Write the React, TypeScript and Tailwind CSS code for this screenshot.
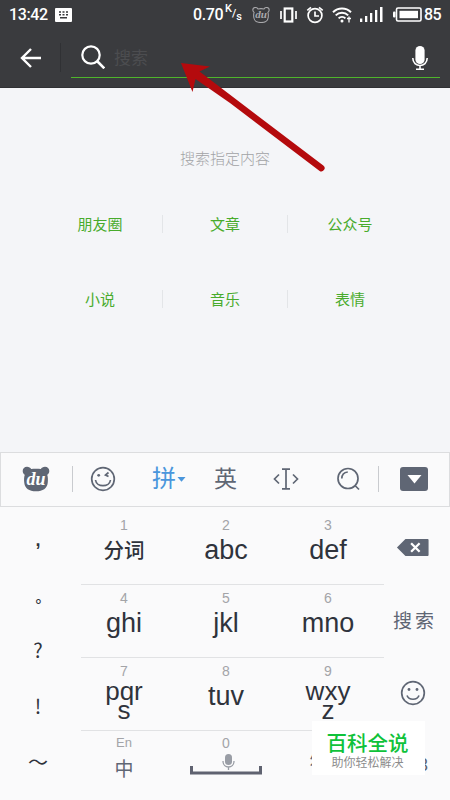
import clsx from 'clsx'

const topics = [
  ['朋友圈', '文章', '公众号'],
  ['小说', '音乐', '表情'],
]

const rows = [
  [
    { digit: '1', lines: ['分词'] },
    { digit: '2', lines: ['abc'] },
    { digit: '3', lines: ['def'] },
  ],
  [
    { digit: '4', lines: ['ghi'] },
    { digit: '5', lines: ['jkl'] },
    { digit: '6', lines: ['mno'] },
  ],
  [
    { digit: '7', lines: ['pqr', 's'] },
    { digit: '8', lines: ['tuv'] },
    { digit: '9', lines: ['wxy', 'z'] },
  ],
]

const BearIcon = ({ outline }: { outline?: boolean }) => (
  <svg
    viewBox="0 0 28 26"
    className={outline ? 'h-[16px] w-[18px]' : 'h-[26px] w-[28px]'}
  >
    <path
      d="M5 .8C2.500.8.7 2.500.7 4.900c0 1.800.9 3.100 2.100 3.900C2 11 1.900 14 2.300 17c.7 5.500 4.700 8.300 11.700 8.300s11-2.800 11.700-8.300c.4-3 .3-6-.5-8.200 1.200-.8 2.100-2.100 2.100-3.900C27.300 2.500 25.500.8 23 .8c-2 0-3.400.9-4.100 2.300-3-.6-6.800-.6-9.800 0C8.400 1.700 7 .8 5 .8z"
      fill={outline ? 'none' : '#5f6674'}
      stroke={outline ? '#a9a9ac' : 'none'}
      strokeWidth="1.700"
    />
    <text
      x="14"
      y="18.500"
      textAnchor="middle"
      fontFamily="Liberation Serif, serif"
      fontStyle="italic"
      fontWeight="bold"
      fontSize="18"
      fill={outline ? '#a9a9ac' : '#fff'}
    >
      du
    </text>
  </svg>
)

const StatusBar = () => (
  <div className="flex h-[29px] items-center pl-[9px] text-[16px] font-medium text-white">
    <span className="w-[46px] tracking-[-0.4px]">13:42</span>
    <svg viewBox="0 0 17 14" className="h-[14px] w-[17px]">
      <rect width="17" height="14" rx="1" fill="#fff" />
      <path
        d="M4 4h2M7.500 4h2M11 4h2M4 6.700h2M7.500 6.700h2M11 6.700h2M5 9.800h7"
        stroke="#3a3b3e"
        strokeWidth="1.400"
      />
    </svg>
    <span className="ml-[121px] w-[32px] tracking-[-0.4px]">0.70</span>
    <span className="flex w-[17px] text-[11px] leading-none">
      <span className="-mt-[5px]">K</span>
      <span>/</span>
      <span className="mt-[3px]">s</span>
    </span>
    <div className="ml-[10px] flex items-center">
      <BearIcon outline />
      <svg
        viewBox="0 0 17 16"
        className="ml-[10px] h-[16px] w-[17px]"
        fill="none"
        stroke="#fff"
      >
        <rect x="4.700" y="1.500" width="7.600" height="13" strokeWidth="2.200" />
        <path d="M1 4v8M16 4v8" strokeWidth="1.700" />
      </svg>
      <svg
        viewBox="0 0 18 18"
        className="ml-[9px] h-[18px] w-[18px]"
        fill="none"
        stroke="#fff"
        strokeWidth="1.700"
      >
        <circle cx="9" cy="9.500" r="6.900" />
        <path d="M9 5.500v4.500h4M1.300 4.300L5 1.300M16.700 4.300L13 1.300" />
      </svg>
      <svg
        viewBox="0 0 20 16"
        className="ml-[8px] h-[16px] w-[20px]"
        fill="none"
        stroke="#fff"
        strokeWidth="2"
      >
        <path d="M1 5.200c5-4.900 13-4.900 18 0M3.700 8.400c3.600-3.500 9-3.500 12.500 0M6.600 11.400c1.900-1.900 4.900-1.900 6.800 0" />
        <circle cx="10" cy="14" r="1.500" fill="#fff" stroke="none" />
        <path d="M17 9.500v6M15 11.500h4" strokeWidth="1.300" />
      </svg>
      <svg
        viewBox="0 0 23 15"
        className="ml-[8px] h-[15px] w-[23px]"
        fill="#fff"
      >
        <rect x="0" y="11.500" width="2.300" height="3.500" />
        <rect x="5" y="9" width="2.300" height="6" />
        <rect x="10" y="6" width="2.300" height="9" />
        <rect x="15" y="3" width="2.300" height="12" />
        <rect x="20" y="0" width="2.500" height="15" />
      </svg>
      <svg viewBox="0 0 29 15" className="ml-[10px] h-[15px] w-[29px]">
        <rect
          x="3.500"
          y="1"
          width="24.500"
          height="13"
          rx="1.500"
          fill="none"
          stroke="#fff"
          strokeWidth="1.600"
        />
        <rect x="6.500" y="3.800" width="18.500" height="7.400" fill="#fff" />
        <rect x="0" y="4.500" width="2.500" height="6" rx="1" fill="#fff" />
      </svg>
      <span className="ml-[2px] tracking-[-0.6px]">85</span>
    </div>
  </div>
)

const SearchBar = () => (
  <div className="flex h-[58px] items-start">
    <svg
      viewBox="0 0 22 20"
      className="mt-[19px] ml-[20px] h-[20px] w-[22px]"
      fill="none"
      stroke="#fff"
      strokeWidth="2.400"
    >
      <path d="M11 1L2 10l9 9M2 10h19" />
    </svg>
    <div className="mt-[14px] ml-[18px] h-[29px] w-px bg-[#303134]" />
    <div className="ml-[10px] flex w-[369px] flex-col">
      <div className="flex h-[48px] items-start">
        <svg
          viewBox="0 0 24 24"
          className="mt-[16px] ml-[10px] h-[24px] w-[24px]"
          fill="none"
          stroke="#fff"
          strokeWidth="2.200"
        >
          <circle cx="10" cy="10" r="8.700" />
          <path d="M16 16l7.300 7.300" strokeWidth="2.600" />
        </svg>
        <span className="ml-[9px] flex-1 pt-[18px] text-[17px] leading-[22px] text-[#4c4d50]">
          搜索
        </span>
        <svg
          viewBox="0 0 16 24"
          className="mt-[17px] mr-[12px] h-[24px] w-[16px]"
          fill="none"
          stroke="#fff"
        >
          <rect x="3.400" y="0" width="9.200" height="18" rx="4.600" fill="#fff" stroke="none" />
          <path d="M.8 12c0 10 14.400 10 14.400 0M8 19v4M4 23.200h8" strokeWidth="1.600" />
        </svg>
      </div>
      <div className="h-px bg-[#4fb52b]" />
    </div>
  </div>
)

const Toolbar = () => (
  <div className="flex h-[55px] items-center border border-[#dcdddf] bg-[#fafafb] pb-px text-[#5f6674]">
    <div className="ml-[21px]">
      <BearIcon />
    </div>
    <div className="ml-[22px] h-[26px] w-px bg-[#c9cbcf]" />
    <svg
      viewBox="0 0 26 26"
      className="ml-[17px] h-[26px] w-[26px]"
      fill="none"
      stroke="currentColor"
      strokeWidth="1.700"
    >
      <circle cx="13" cy="13" r="11.300" />
      <path d="M5.500 14c1 7.500 14 7.500 15 0M18.500 6.500l-3 2.500 3 1.500" />
      <circle cx="8.700" cy="9.300" r="1.400" fill="currentColor" stroke="none" />
    </svg>
    <span className="ml-[36px] text-[24px] leading-[30px] text-[#4a96dc]">
      拼
    </span>
    <svg viewBox="0 0 8 5" className="ml-px h-[5px] w-[9px]" fill="#4a96dc">
      <path d="M0 0h8L4 4.800z" />
    </svg>
    <span className="ml-[28px] text-[23px] leading-[30px]">英</span>
    <svg
      viewBox="0 0 26 22"
      className="ml-[36px] h-[22px] w-[26px]"
      fill="none"
      stroke="currentColor"
      strokeWidth="1.700"
    >
      <path d="M9 1.200h8M9 20.800h8M13 1v20M6 6.500L1.500 11 6 15.500M20 6.500l4.500 4.500-4.500 4.500" />
    </svg>
    <svg
      viewBox="0 0 24 24"
      className="ml-[38px] h-[24px] w-[24px]"
      fill="none"
      stroke="currentColor"
      strokeWidth="1.700"
    >
      <circle cx="11" cy="11.500" r="10" />
      <path d="M18 18.500l4 4M4.800 11.500c0-3.700 2.300-6 6-6.500" />
    </svg>
    <div className="ml-[17px] h-[26px] w-px bg-[#c9cbcf]" />
    <div className="ml-[21px] flex h-[24px] w-[28px] items-center justify-center rounded-[3px] bg-[#5f6674]">
      <svg viewBox="0 0 15 9" className="h-[9px] w-[15px]" fill="#fff">
        <path d="M.5 0h14L7.500 8.500z" />
      </svg>
    </div>
  </div>
)

const Key = ({ digit, lines }: { digit: string; lines: string[] }) => (
  <div className="flex flex-col items-center">
    <span className="mt-[5px] text-[14px] leading-[16px] text-[#a3a4a8]">
      {digit}
    </span>
    <div
      className={clsx(
        'text-center text-[#2f333c]',
        lines[0] === '分词' && 'pt-[3px] text-[20.500px] leading-[30px] font-medium',
        lines[0] !== '分词' && lines.length === 1 && 'pt-px text-[27px] leading-[32px]',
        lines.length > 1 && 'pt-[3px] text-[26px] leading-[19px]'
      )}
    >
      {lines.map((line) => (
        <div key={line}>{line}</div>
      ))}
    </div>
  </div>
)

const Keypad = () => (
  <div className="relative flex h-[293px] bg-[#fafafb] pt-[5px]">
    <div className="flex w-[81px] flex-col pt-[8px] pr-[5px] text-center text-[20px] text-[#2f333c]">
      <span className="h-[53px] text-[18px] font-bold leading-[40px]">,</span>
      <span className="h-[53px] pl-[10px] text-[15px] font-medium leading-[48px]">。</span>
      <span className="h-[54px] font-['Noto_Sans_CJK_SC',sans-serif] leading-[48px]">?</span>
      <span className="h-[55px] font-['Noto_Sans_CJK_SC',sans-serif] leading-[52px]">!</span>
      <span className="leading-[56px]">～</span>
    </div>
    <div className="w-[303px]">
      {rows.map((row, i) => (
        <div key={i} className="h-[73px] border-b border-[#e1e2e4]">
          <div className="-ml-2 grid w-[306px] grid-cols-3">
            {row.map((key) => (
              <Key key={key.digit} {...key} />
            ))}
          </div>
        </div>
      ))}
      <div className="-ml-2 grid w-[306px] grid-cols-3 text-[#5f6674]">
        <div className="flex flex-col items-center">
          <span className="mt-[4px] text-[13px] leading-[16px] text-[#a3a4a8]">
            En
          </span>
          <span className="mt-[5px] text-[19px] leading-[28px]">中</span>
        </div>
        <div className="flex flex-col items-center">
          <span className="mt-[4px] text-[14px] leading-[16px] text-[#a3a4a8]">
            0
          </span>
          <svg viewBox="0 0 72 22" className="mt-[2px] h-[22px] w-[72px]" fill="none">
            <path d="M1.500 13v7h69v-7" stroke="#5f6270" strokeWidth="3" />
            <rect x="35" y="1" width="7" height="11" rx="3.500" fill="#999da5" />
            <path
              d="M33 8c0 8 11 8 11 0M38.500 14v3"
              stroke="#999da5"
              strokeWidth="1.300"
            />
          </svg>
        </div>
        <span className="pt-[17px] pr-[18px] text-center text-[19px] leading-[32px]">符</span>
      </div>
    </div>
    <div className="flex w-[58px] flex-col items-center text-[#5f6674]">
      <div className="flex h-[71px] items-center">
        <svg viewBox="0 0 34 18" className="h-[17px] w-[34px]">
          <path d="M9 0h23.500a1 1 0 011 1v16a1 1 0 01-1 1H9L0 9z" fill="#5f6674" />
          <path d="M15 4.500l9 9M24 4.500l-9 9" stroke="#fff" strokeWidth="2.400" />
        </svg>
      </div>
      <span className="h-[73px] pl-[4px] text-[19px] leading-[77px] tracking-[3px] whitespace-nowrap">
        搜索
      </span>
      <div className="flex h-[73px] items-center">
        <svg
          viewBox="0 0 26 26"
          className="h-[26px] w-[26px]"
          fill="none"
          stroke="currentColor"
          strokeWidth="1.700"
        >
          <circle cx="13" cy="13" r="11.300" />
          <path d="M7 15.500c2 5 10 5 12 0" />
          <circle cx="9" cy="9.500" r="1.400" fill="currentColor" stroke="none" />
          <circle cx="17" cy="9.500" r="1.400" fill="currentColor" stroke="none" />
        </svg>
      </div>
      <span className="pt-[20px] text-[18px] leading-[32px]">123</span>
    </div>

    {/* site badge */}
    <div className="absolute top-[214px] left-[312px] flex h-[54px] w-[113px] flex-col items-center bg-white pr-[2px]">
      <span className="mt-[9px] text-[20.500px] leading-[27px] font-medium text-[#0fc23a]">
        百科全说
      </span>
      <span className="text-[12px] leading-[13px] text-[#8c8c8c]">
        助你轻松解决
      </span>
    </div>
  </div>
)

const App = () => {
  return (
    <div className="relative h-[800px] w-[450px] overflow-hidden bg-[#f4f5f8] font-['Liberation_Sans','Noto_Sans_CJK_SC',sans-serif]">
      <div className="h-[88px] border-b border-[#303134] bg-[#3a3b3e] font-[Roboto,'Noto_Sans_CJK_SC',sans-serif]">
        <StatusBar />
        <SearchBar />
      </div>

      <div className="h-[364px] pt-[58px] font-['Noto_Sans_CJK_SC',sans-serif] text-[15px]">
        <p className="text-center leading-[24px] font-light text-[#a2a3a6]">
          搜索指定内容
        </p>
        <div className="mx-[38px] mt-[41px] flex flex-col gap-[49px]">
          {topics.map((row, i) => (
            <div
              key={i}
              className="grid h-[26px] grid-cols-[125px_125px_124px] items-center text-center text-[#48ab2c]"
            >
              {row.map((topic, j) => (
                <span
                  key={topic}
                  className={clsx(
                    'h-[18px] leading-[18px]',
                    j < 2 && 'border-r border-[#e3e5e8]'
                  )}
                >
                  {topic}
                </span>
              ))}
            </div>
          ))}
        </div>
      </div>

      <Toolbar />
      <Keypad />

      {/* pointer to the search field */}
      <svg
        viewBox="0 0 150 115"
        className="absolute top-[60px] left-[178px] h-[115px] w-[150px]"
        fill="#b40a0d"
      >
        <path d="M3 3l29 3.500-10.500 5L145.300 105.500a3 3 0 01-4 5.200L52 43 17.500 19l-3 13z" />
      </svg>
    </div>
  )
}

export default App
